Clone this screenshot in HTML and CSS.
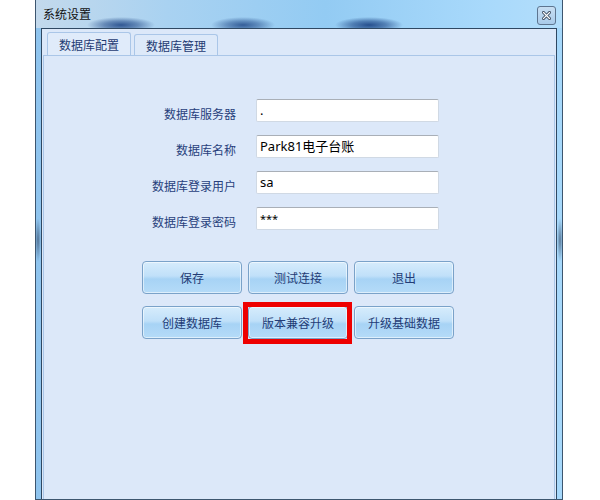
FILE: index.html
```html
<!DOCTYPE html>
<html lang="zh-CN">
<head>
<meta charset="utf-8">
<title>系统设置</title>
<link rel="stylesheet" href="styles.css">
</head>
<body>
<div class="window">
  <div class="titlebar">
    <span class="title">系统设置</span>
    <span class="close">
      <svg width="9" height="9" viewBox="0 0 9 9"><path d="M1.5 1.5 L7.5 7.5 M7.5 1.5 L1.5 7.5" stroke="#3b4a5e" stroke-width="3" stroke-linecap="square"/><path d="M1.5 1.5 L7.5 7.5 M7.5 1.5 L1.5 7.5" stroke="#ffffff" stroke-width="1.2" stroke-linecap="square"/></svg>
    </span>
  </div>
  <div class="client">
    <div class="tabs">
      <div class="tab active">数据库配置</div>
      <div class="tab">数据库管理</div>
    </div>
    <div class="panel">
      <div class="form">
        <label class="lbl">数据库服务器</label><div class="input">.</div>
        <label class="lbl">数据库名称</label><div class="input">Park81电子台账</div>
        <label class="lbl">数据库登录用户</label><div class="input">sa</div>
        <label class="lbl">数据库登录密码</label><div class="input small">***</div>
      </div>
      <div class="buttons">
        <button class="btn">保存</button>
        <button class="btn">测试连接</button>
        <button class="btn">退出</button>
        <button class="btn">创建数据库</button>
        <button class="btn marked">版本兼容升级</button>
        <button class="btn">升级基础数据</button>
      </div>
    </div>
  </div>
</div>
</body>
</html>
```
FILE: styles.css
```css
html, body {
  margin: 0;
  padding: 0;
  background: #ffffff;
  font-family: "Noto Sans CJK SC", "Noto Sans", sans-serif;
}
.window {
  margin-left: 35px;
  width: 528px;
  height: 500px;
  box-sizing: border-box;
  border: 1px solid #3d566f;
  border-top: none;
  padding: 0 5px;
  background:
    radial-gradient(ellipse 3px 22px at 2px 240px, rgba(40,60,90,0.6), rgba(40,60,90,0) 100%) no-repeat,
    radial-gradient(ellipse 3px 22px at 524px 240px, rgba(40,60,90,0.6), rgba(40,60,90,0) 100%) no-repeat,
    linear-gradient(90deg, #8fc4ee 0%, #9fd3f8 50%, #a6d8fb 100%);
  display: flex;
  flex-direction: column;
}
.titlebar {
  height: 28px;
  margin: 0 -5px;
  padding: 0 6px 0 7px;
  display: flex;
  align-items: center;
  justify-content: space-between;
  background:
    radial-gradient(ellipse 34px 8px at 85px 25px, rgba(25,65,130,0.85) 0%, rgba(25,65,130,0.5) 50%, rgba(25,65,130,0) 100%),
    radial-gradient(ellipse 32px 8px at 207px 25px, rgba(25,65,130,0.8) 0%, rgba(25,65,130,0.45) 50%, rgba(25,65,130,0) 100%),
    radial-gradient(ellipse 34px 8px at 333px 25px, rgba(25,65,130,0.9) 0%, rgba(25,65,130,0.55) 50%, rgba(25,65,130,0) 100%),
    linear-gradient(90deg, #c3d9ec 0%, #a9d2f1 25%, #93cbf3 55%, #a8d9fb 85%, #b3defb 100%);
}
.title {
  font-size: 12px;
  color: #111;
  margin-top: -1px;
}
.close {
  width: 17px;
  height: 17px;
  border: 1px solid #5d7590;
  border-radius: 3px;
  background: linear-gradient(#c7def2, #a9cbea);
  display: flex;
  align-items: center;
  justify-content: center;
  margin-top: 2px;
}
.client {
  flex: 1;
  border: 1px solid #2f4862;
  border-bottom: none;
  background: #dce8f9;
  padding: 3px 1px 0 1px;
  display: flex;
  flex-direction: column;
}
.tabs {
  display: flex;
  align-items: flex-end;
  gap: 3px;
  margin-left: 4px;
  height: 23px;
}
.tab {
  width: 84px;
  height: 21px;
  box-sizing: border-box;
  border: 1px solid #aac6e8;
  border-bottom: none;
  border-radius: 3px 3px 0 0;
  background: #dde9f9;
  color: #1f3b73;
  font-size: 12px;
  display: flex;
  align-items: center;
  justify-content: center;
}
.tab.active {
  height: 23px;
  background: #e0ebfa;
}
.panel {
  flex: 1;
  border: 1px solid #aac6e8;
  border-bottom: none;
  background: #dce8f9;
}
.form {
  display: grid;
  grid-template-columns: 130px 183px;
  column-gap: 20px;
  row-gap: 13px;
  margin: 43px 0 0 62px;
}
.lbl {
  font-size: 12px;
  color: #283f7c;
  text-align: right;
  align-self: center;
  padding-top: 6px;
}
.input {
  height: 23px;
  box-sizing: border-box;
  background: #fff;
  border: 1px solid #d0d9e4;
  border-top-color: #a9afb7;
  border-radius: 2px;
  font-family: "Noto Sans", "Noto Sans CJK SC", sans-serif;
  font-size: 13px;
  line-height: 21px;
  padding-left: 3px;
  color: #000;
}
.input.small {
  font-size: 11px;
}
.buttons {
  display: grid;
  grid-template-columns: repeat(3, 100px);
  column-gap: 6px;
  row-gap: 12px;
  margin: 31px 0 0 98px;
}
.btn {
  height: 33px;
  box-sizing: border-box;
  border: 1px solid #7aa2c9;
  border-radius: 4px;
  background: linear-gradient(#d6ecfc 0%, #c0e0f9 45%, #a7d3f5 55%, #b5dbf8 100%);
  box-shadow: inset 0 0 0 1px rgba(255,255,255,0.55);
  color: #233c76;
  font-family: "Noto Sans CJK SC", sans-serif;
  font-size: 12px;
  padding: 0;
}
.btn.marked {
  position: relative;
}
.btn.marked::after {
  content: "";
  position: absolute;
  top: -5px;
  left: -6px;
  right: -5px;
  bottom: -6px;
  border: 5px solid #ee0000;
}
```
